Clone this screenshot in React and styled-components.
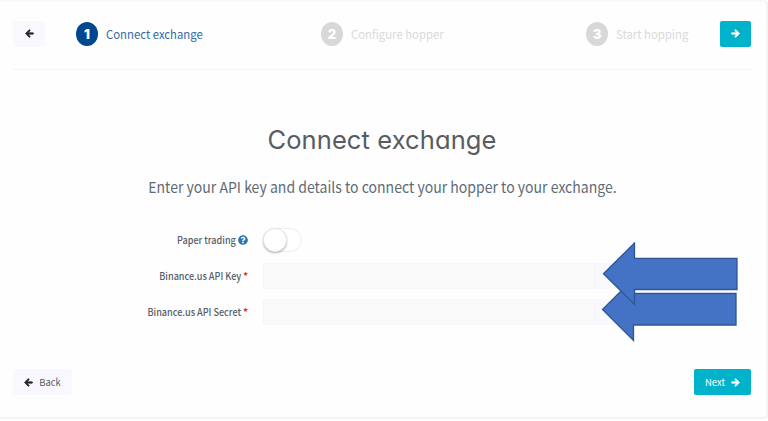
import React from "react";
import styled, { createGlobalStyle } from "styled-components";
import { FaArrowLeft, FaArrowRight, FaQuestionCircle } from "react-icons/fa";

const GlobalStyle = createGlobalStyle`
  * { box-sizing: border-box; }
  body {
    margin: 0;
    background: #fff;
    font-family: "Noto Sans CJK SC", "Noto Sans", sans-serif;
    color: #58636d;
  }
`;

const Card = styled.main`
  position: relative;
  display: flex;
  flex-direction: column;
  width: 768px;
  height: 419px;
  padding: 0 15px 0 13px;
  background: #fefefe;
  border-top: 2px solid #f8f8fa;
  border-right: 2px solid #f3f3fa;
  border-bottom: 2px solid #f3f3fa;
  border-radius: 0 4px 4px 0;
`;

const Header = styled.header`
  display: flex;
  align-items: center;
  height: 68px;
  padding-bottom: 4px;
  border-bottom: 1px solid #f4f4f4;
`;

const Button = styled.button`
  display: flex;
  align-items: center;
  justify-content: center;
  gap: 6px;
  width: ${(p) => p.$width}px;
  height: 26px;
  padding: 0;
  border: 0;
  border-radius: 2px;
  background: ${(p) => (p.$primary ? "#00b3ca" : "#f9f8ff")};
  color: ${(p) => (p.$primary ? "#fff" : "#5c5c5c")};
  font: 400 9.5px/26px "Noto Sans CJK SC", sans-serif;
  svg {
    color: ${(p) => (p.$primary ? "#fff" : "#272727")};
    stroke: currentColor;
    stroke-width: 42px;
    overflow: visible;
  }
`;

const Step = styled.div`
  display: flex;
  align-items: center;
  gap: 8px;
  margin-left: ${(p) => p.$gap}px;
  width: ${(p) => p.$width}px;
  color: ${(p) => (p.$active ? "#336ba5" : "#dadada")};
  font-size: 12px;
  line-height: 24px;
  white-space: nowrap;
`;

const StepText = styled.span`
  transform: scaleX(0.945);
  transform-origin: left;
`;

const StepNumber = styled.span`
  flex: none;
  width: 22px;
  height: 24px;
  border-radius: 50%;
  background: ${(p) => (p.$active ? "#00478f" : "#d8d8d8")};
  color: #fff;
  font: 900 13px/24px Inter, sans-serif;
  text-align: center;
`;

const Spacer = styled.div`
  flex: 1;
`;

const Title = styled.h1`
  margin: 50px 0 0;
  font: 400 25.5px/40px Inter, sans-serif;
  font-feature-settings: "cv11";
  letter-spacing: 0.1px;
  text-align: center;
  color: #585c60;
`;

const Subtitle = styled.p`
  margin: 15px 0 0;
  padding: 0 0 1px 1px;
  font-size: 15px;
  line-height: 24px;
  text-align: center;
  color: #606b76;
  transform: scaleX(0.936);
`;

const Form = styled.form`
  display: flex;
  flex-direction: column;
  margin-top: 27px;
`;

const Row = styled.div`
  display: flex;
  align-items: center;
  height: 26px;
  margin-bottom: ${(p) => p.$after}px;
`;

const Label = styled.label`
  display: flex;
  justify-content: flex-end;
  align-items: center;
  gap: 2px;
  width: 235px;
  margin-right: 15px;
  font-size: 10px;
  font-weight: 500;
  line-height: 26px;
  white-space: nowrap;
  color: #56606a;
`;

const LabelText = styled.span`
  transform: scaleX(0.908);
  transform-origin: right;
`;

const Required = styled.span`
  color: #ff2020;
  font-size: 9px;
  font-weight: 900;
`;

const Toggle = styled.span`
  display: flex;
  width: 39px;
  height: 24px;
  border: 1px solid #eee;
  border-radius: 12px;
  background: #fff;
`;

const Knob = styled.span`
  width: 24px;
  height: 24px;
  margin: -1px 0 0 -1px;
  border-radius: 50%;
  background: #fff;
  border: 1px solid #e8e8e8;
  box-shadow: 0 1px 2px rgba(0, 0, 0, 0.3);
`;

const Input = styled.input`
  width: 332px;
  height: 26px;
  padding: 0 8px;
  border: 1px solid #f6f6f6;
  border-radius: 2px 0 0 2px;
  background: #fafafa;
`;

const Addon = styled.span`
  width: 35px;
  height: 26px;
  background: #f9f8ff;
`;

const Footer = styled.footer`
  display: flex;
  justify-content: space-between;
  margin-top: 44px;
`;

const Pointers = styled.svg`
  position: absolute;
  top: 238px;
  left: 598px;
`;

const Field = ({ label, after }) => (
  <Row $after={after}>
    <Label><LabelText>{label}</LabelText><Required>*</Required></Label>
    <Input aria-label={label} />
    <Addon />
  </Row>
);

export default function App() {
  return (
    <>
      <GlobalStyle />
      <Card>
        <Header>
          <Button $width={32} aria-label="Previous step"><FaArrowLeft size={9} /></Button>
          <Step $active $gap={31} $width={245}><StepNumber $active>1</StepNumber><StepText>Connect exchange</StepText></Step>
          <Step $gap={0} $width={265}><StepNumber>2</StepNumber><StepText>Configure hopper</StepText></Step>
          <Step $gap={0} $width={110}><StepNumber>3</StepNumber><StepText>Start hopping</StepText></Step>
          <Spacer />
          <Button $primary $width={31} aria-label="Next step"><FaArrowRight size={9} /></Button>
        </Header>
        <Title>Connect exchange</Title>
        <Subtitle>Enter your API key and details to connect your hopper to your exchange.</Subtitle>
        <Form>
          <Row $after={10}>
            <Label><LabelText>Paper trading</LabelText><FaQuestionCircle size={10} color="#2e75b5" /></Label>
            <Toggle role="switch" aria-checked="false"><Knob /></Toggle>
          </Row>
          <Field label="Binance.us API Key" after={10} />
          <Field label="Binance.us API Secret" after={0} />
        </Form>
        <Footer>
          <Button $width={59}><FaArrowLeft size={9} />Back</Button>
          <Button $primary $width={57}>Next<FaArrowRight size={9} /></Button>
        </Footer>
        <Pointers width="144" height="106" viewBox="598 240 144 106" fill="#4472c4" stroke="#2f5597" strokeWidth="1.3">
          <path d="M602.5 309.5 633.5 278.5V293.5H736V325H633.5V340.5Z" />
          <path d="M603.5 273.7 634.5 243V258.3H737V289.5H634.5V304.5Z" />
        </Pointers>
      </Card>
    </>
  );
}
